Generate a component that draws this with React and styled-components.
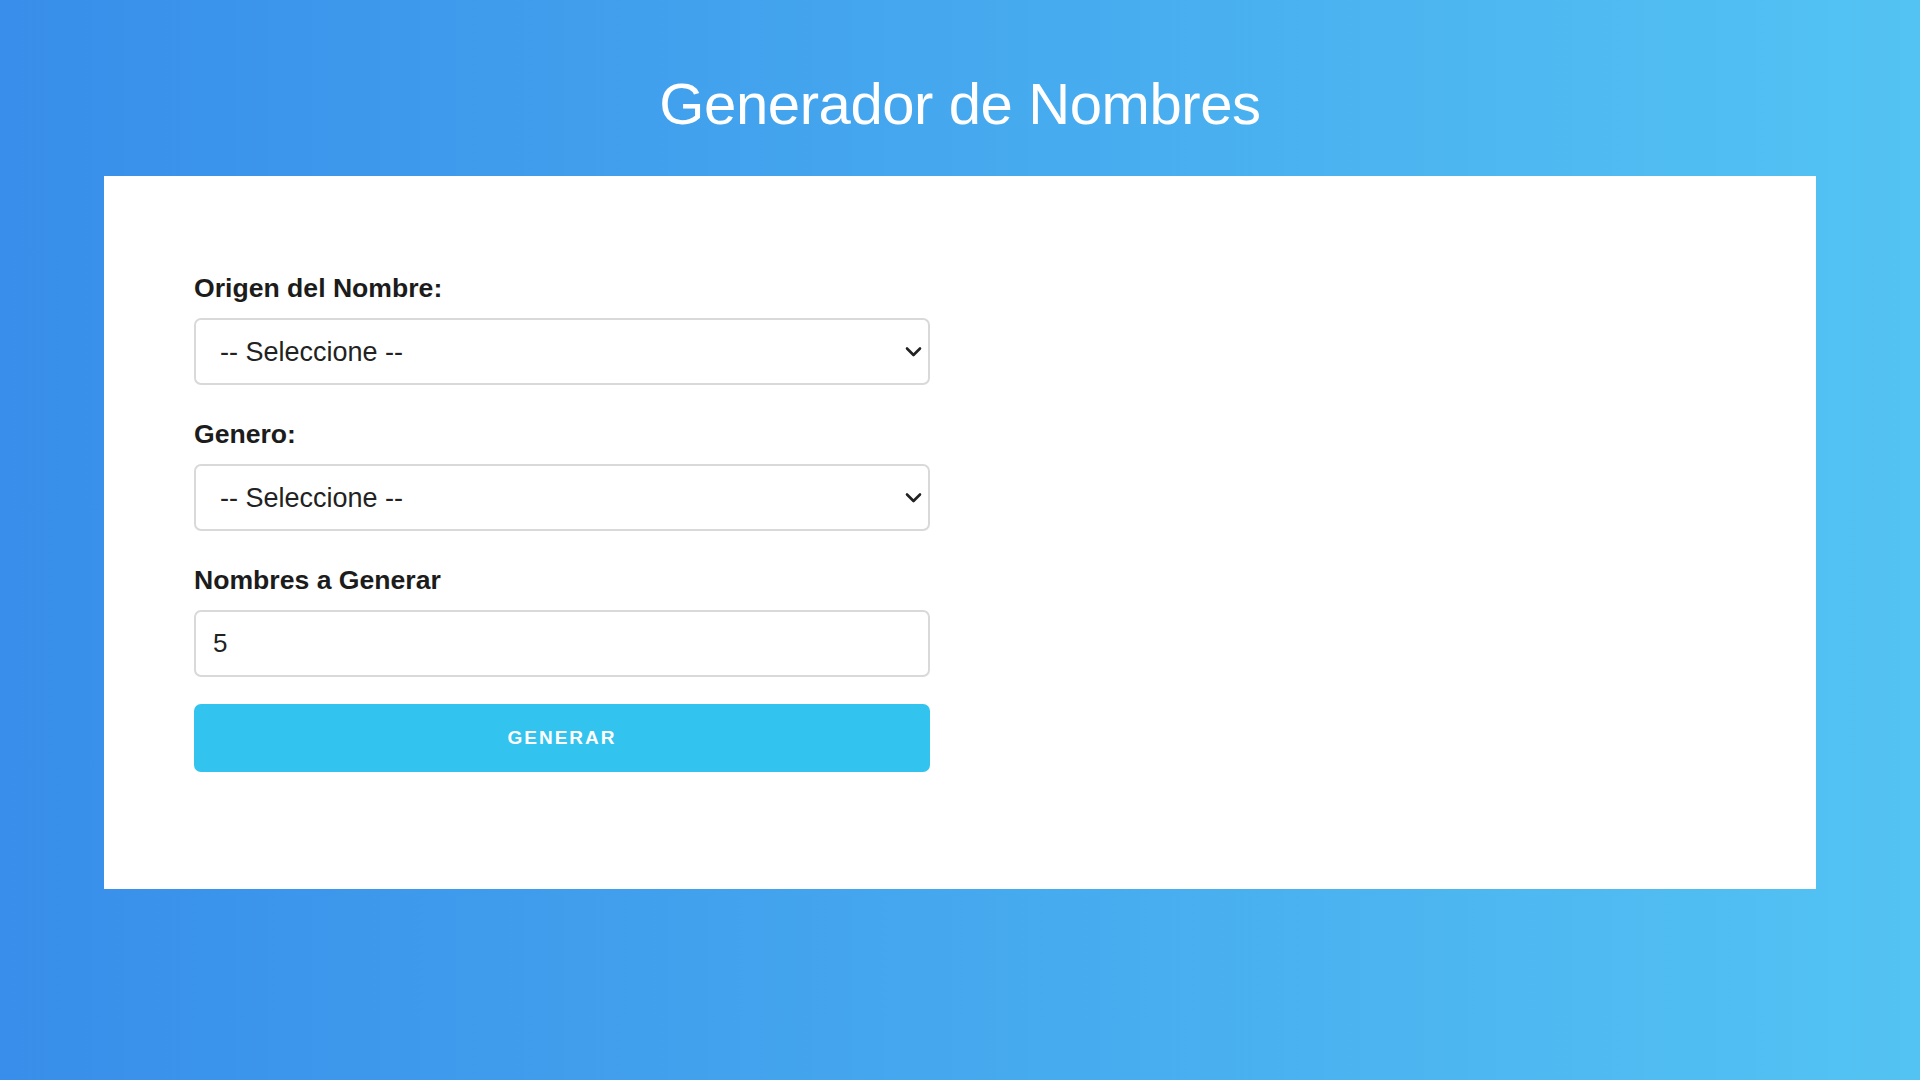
import React from "react";
import styled, { createGlobalStyle } from "styled-components";

const Global = createGlobalStyle`
  html, body { margin: 0; padding: 0; }
  body {
    font-family: "Liberation Sans", Arial, sans-serif;
    min-height: 100vh;
    background: linear-gradient(to right, #388eea, #53c3f3);
  }
  * { box-sizing: border-box; }
`;

const Page = styled.div`
  min-height: 100vh;
  padding: 71px 104px 0;
`;

const Title = styled.h1`
  margin: 0 0 39px;
  text-align: center;
  color: #ffffff;
  font-weight: 400;
  font-size: 58px;
  line-height: 66px;
  letter-spacing: -0.4px;
`;

const Card = styled.div`
  background: #ffffff;
  padding: 97px 90px 117px;
`;

const Form = styled.form`
  width: 736px;
  display: flex;
  flex-direction: column;
`;

const Field = styled.div`
  display: flex;
  flex-direction: column;
  margin-bottom: ${(p) => p.$mb}px;
`;

const Label = styled.label`
  display: block;
  font-size: 26.6px;
  line-height: 30px;
  font-weight: 700;
  color: #1c1c1c;
  margin-bottom: 15px;
`;

const SelectWrap = styled.div`
  position: relative;
`;

const Select = styled.select`
  appearance: none;
  -webkit-appearance: none;
  width: 100%;
  height: 67px;
  border: 2px solid #d9d9d9;
  border-radius: 7px;
  background: #ffffff;
  padding: 0 40px 0 24px;
  font-family: "Liberation Sans", Arial, sans-serif;
  font-size: 27px;
  color: #222222;
  outline: none;
`;

const Chevron = styled.svg`
  position: absolute;
  right: 8px;
  top: 50%;
  transform: translateY(-50%);
  pointer-events: none;
`;

const Input = styled.input`
  width: 100%;
  height: 67px;
  border: 2px solid #d9d9d9;
  border-radius: 7px;
  background: #ffffff;
  padding: 0 17px;
  font-family: "Liberation Sans", Arial, sans-serif;
  font-size: 26px;
  color: #222222;
  outline: none;
`;

const Button = styled.button`
  width: 100%;
  height: 68px;
  border: none;
  border-radius: 7px;
  background: #32c3ef;
  color: #ffffff;
  font-family: "Liberation Sans", Arial, sans-serif;
  font-weight: 700;
  font-size: 19px;
  letter-spacing: 2px;
  text-transform: uppercase;
  cursor: pointer;
`;

function SelectField({ label, id }) {
  return (
    <Field $mb={34}>
      <Label htmlFor={id}>{label}</Label>
      <SelectWrap>
        <Select id={id} defaultValue="">
          <option value="">-- Seleccione --</option>
        </Select>
        <Chevron width="17" height="11" viewBox="0 0 17 11">
          <path d="M2 2 L8.5 8.5 L15 2" fill="none" stroke="#222" strokeWidth="2.6" strokeLinecap="round" strokeLinejoin="round" />
        </Chevron>
      </SelectWrap>
    </Field>
  );
}

export default function App() {
  return (
    <>
      <Global />
      <Page>
        <Title>Generador de Nombres</Title>
        <Card>
          <Form onSubmit={(e) => e.preventDefault()}>
            <SelectField label="Origen del Nombre:" id="origen" />
            <SelectField label="Genero:" id="genero" />
            <Field $mb={27}>
              <Label htmlFor="cantidad">Nombres a Generar</Label>
              <Input id="cantidad" type="text" defaultValue="5" />
            </Field>
            <Button type="submit">Generar</Button>
          </Form>
        </Card>
      </Page>
    </>
  );
}
